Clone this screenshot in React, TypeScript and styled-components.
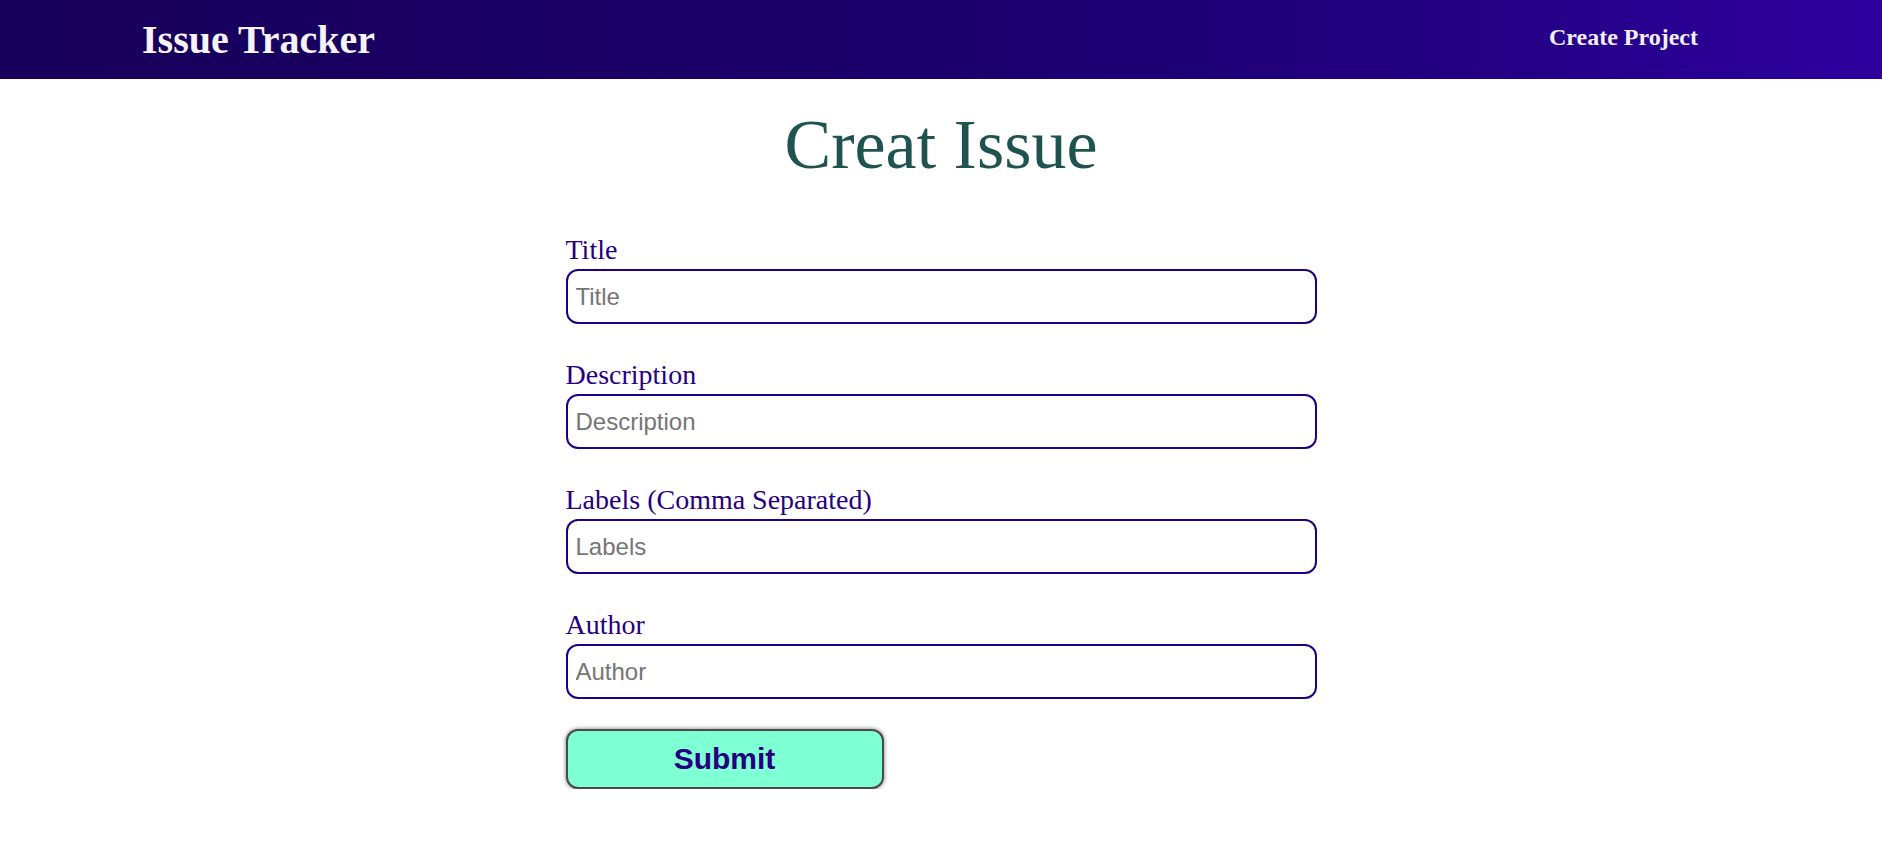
import React from "react";
import styled, { createGlobalStyle } from "styled-components";

const GlobalStyle = createGlobalStyle`
  html, body {
    margin: 0;
    padding: 0;
    background: #ffffff;
  }
  body {
    font-family: "Liberation Serif", "Times New Roman", serif;
  }
  * { box-sizing: border-box; }
`;

const Header = styled.header`
  height: 79px;
  display: flex;
  align-items: center;
  justify-content: space-between;
  padding: 0 184px 0 142px;
  background: linear-gradient(90deg, #170059 0%, #1b006c 50%, #21007f 75%, #2e009e 100%);
`;

const Brand = styled.h1`
  margin: 0;
  font-family: "Liberation Serif", "Times New Roman", serif;
  font-weight: 700;
  font-size: 40px;
  line-height: 1;
  color: #f5f3f7;
`;

const NavLink = styled.a`
  font-family: "Liberation Serif", "Times New Roman", serif;
  font-weight: 700;
  font-size: 24px;
  line-height: 1;
  color: #f2eff6;
  text-decoration: none;
  margin-bottom: 5px;
  cursor: pointer;
`;

const Main = styled.main`
  display: flex;
  flex-direction: column;
  align-items: center;
`;

const Heading = styled.h2`
  margin: 31px 0 0;
  font-family: "Liberation Serif", "Times New Roman", serif;
  font-weight: 400;
  font-size: 70px;
  line-height: 1;
  color: #1f5350;
`;

const Form = styled.form`
  width: 751px;
  margin-top: 53px;
  display: flex;
  flex-direction: column;
`;

const Field = styled.div`
  display: flex;
  flex-direction: column;
  & + & {
    margin-top: 34px;
  }
`;

const Label = styled.label`
  font-family: "Liberation Serif", "Times New Roman", serif;
  font-size: 28px;
  line-height: 34px;
  color: #26007f;
`;

const Input = styled.input`
  margin-top: 2px;
  height: 55px;
  width: 100%;
  border: 2px solid #200080;
  border-radius: 12px;
  padding: 0 8px;
  font-family: "Liberation Sans", Arial, sans-serif;
  font-size: 24px;
  color: #222;
  background: #fff;
  outline: none;
  &::placeholder {
    color: #757575;
  }
`;

const Actions = styled.div`
  display: flex;
  margin-top: 30px;
`;

const SubmitButton = styled.button`
  width: 318px;
  height: 60px;
  background: #7fffd4;
  border: 2px solid #4a4a4a;
  border-radius: 12px;
  box-shadow: 0 0 4px rgba(0, 0, 0, 0.55);
  font-family: "Liberation Sans", Arial, sans-serif;
  font-weight: 700;
  font-size: 30px;
  color: #26007f;
  cursor: pointer;
  padding: 0;
`;

const fields = [
  { id: "title", label: "Title", placeholder: "Title" },
  { id: "description", label: "Description", placeholder: "Description" },
  { id: "labels", label: "Labels (Comma Separated)", placeholder: "Labels" },
  { id: "author", label: "Author", placeholder: "Author" },
];

export default function App() {
  return (
    <>
      <GlobalStyle />
      <Header>
        <Brand>Issue Tracker</Brand>
        <NavLink>Create Project</NavLink>
      </Header>
      <Main>
        <Heading>Creat Issue</Heading>
        <Form onSubmit={(e) => e.preventDefault()}>
          {fields.map((f) => (
            <Field key={f.id}>
              <Label htmlFor={f.id}>{f.label}</Label>
              <Input id={f.id} placeholder={f.placeholder} />
            </Field>
          ))}
          <Actions>
            <SubmitButton type="submit">Submit</SubmitButton>
          </Actions>
        </Form>
      </Main>
    </>
  );
}
